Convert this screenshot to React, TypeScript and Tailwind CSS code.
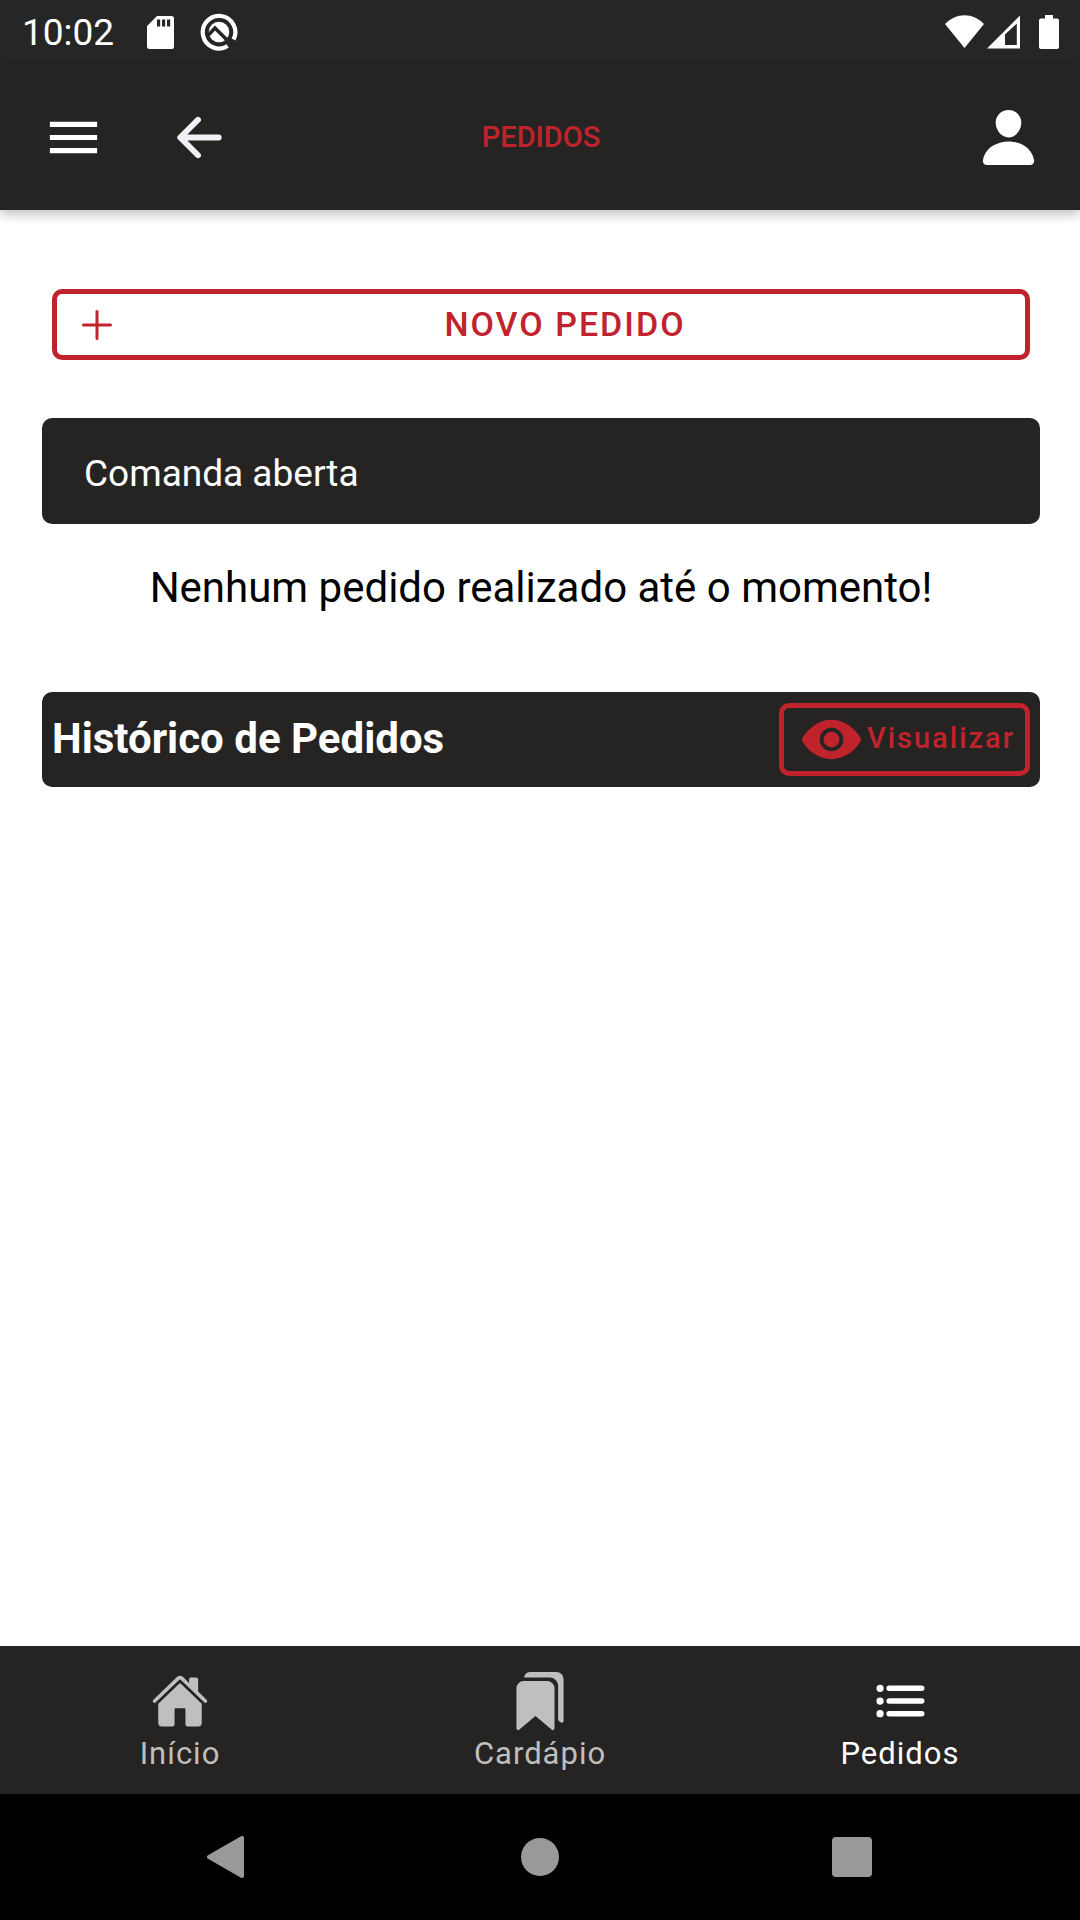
import type { ComponentType } from "react";
import {
  IoAdd,
  IoArrowBack,
  IoBookmarks,
  IoEye,
  IoHome,
  IoList,
  IoMenuSharp,
  IoPerson,
} from "react-icons/io5";

type Tab = {
  label: string;
  href: string;
  Icon: ComponentType<{ className?: string }>;
};

const TABS: Tab[] = [
  { label: "Início", href: "#inicio", Icon: IoHome },
  { label: "Cardápio", href: "#cardapio", Icon: IoBookmarks },
  { label: "Pedidos", href: "#pedidos", Icon: IoList },
];

const ACTIVE_TAB = "Pedidos";

function StatusBar() {
  return (
    <div className="flex h-16 items-center justify-between bg-[#262626] pl-[22px] pr-[21px] text-white">
      <div className="flex items-center">
        <span className="pt-0.5 text-[37px] leading-[40px]">10:02</span>

        {/* SD card */}
        <svg className="ml-[33px] h-[33px] w-[27px]" viewBox="0 0 27 33">
          <path
            fill="currentColor"
            fillRule="evenodd"
            d="M10 0H24.5A2.5 2.5 0 0 1 27 2.5V30.5A2.5 2.5 0 0 1 24.5 33H2.5A2.5 2.5 0 0 1 0 30.5V10ZM10 3.5V10.5H13.2V3.5ZM15 3.5V10.5H18.2V3.5ZM20 3.5V10.5H23.2V3.5Z"
          />
        </svg>

        {/* Android debug badge */}
        <svg className="ml-[26px] size-[38px]" viewBox="0 0 38 38" fill="none">
          <path
            d="M27.7 33A16.3 16.3 0 1 1 33.6 26.5"
            stroke="currentColor"
            strokeWidth="4.2"
          />
          <circle cx="19" cy="19" r="10.3" fill="currentColor" />
          <path d="M7.5 23L15 15L29 29" stroke="#262626" strokeWidth="3.6" />
        </svg>
      </div>

      <div className="flex items-center">
        {/* Wi-Fi */}
        <svg className="h-[34px] w-[39px]" viewBox="0 0 39 34">
          <path fill="currentColor" d="M0 9C11-2.7 28-2.7 39 9L19.5 33Z" />
        </svg>

        {/* Mobile signal */}
        <svg className="ml-[3px] h-[34px] w-[33px]" viewBox="0 0 33 34">
          <path
            fill="currentColor"
            fillRule="evenodd"
            d="M0 33.5L33 .5V33.5ZM18 19.5V30H29.8V8.5Z"
          />
        </svg>

        {/* Battery */}
        <svg className="ml-[19px] h-[34px] w-5" viewBox="0 0 20 34">
          <path
            fill="currentColor"
            d="M6 0H14V3.5H18A2 2 0 0 1 20 5.5V32A2 2 0 0 1 18 34H2A2 2 0 0 1 0 32V5.5A2 2 0 0 1 2 3.5H6Z"
          />
        </svg>
      </div>
    </div>
  );
}

function Header() {
  return (
    <header className="z-10 grid h-[146px] grid-cols-[1fr_auto_1fr] items-center bg-[#252422] pl-[42px] pr-10 shadow-[0_3px_12px_rgba(0,0,0,0.3)]">
      <div className="flex items-center gap-[63px]">
        <button type="button" aria-label="Menu" className="text-white">
          <IoMenuSharp className="size-[63px]" />
        </button>
        <button type="button" aria-label="Voltar" className="text-[#f1f2f7]">
          <IoArrowBack className="size-[63px]" />
        </button>
      </div>

      <h1 className="text-[29px] font-medium leading-[36px] text-[#c1232d]">PEDIDOS</h1>

      <button type="button" aria-label="Perfil" className="justify-self-end text-white">
        <IoPerson className="size-[63px]" />
      </button>
    </header>
  );
}

function TabBar() {
  return (
    <nav className="grid h-[148px] grid-cols-3 bg-[#252422]">
      {TABS.map(({ label, href, Icon }) => (
        <a
          key={label}
          href={href}
          className={
            label === ACTIVE_TAB
              ? "flex flex-col items-center gap-1.5 pt-[26px] text-white"
              : "flex flex-col items-center gap-1.5 pt-[26px] text-[#bfbfbf]"
          }
        >
          <Icon className="size-[58px]" />
          <span className="text-[31px] leading-[36px] tracking-[1px]">{label}</span>
        </a>
      ))}
    </nav>
  );
}

function SystemNav() {
  return (
    <div className="grid h-[126px] grid-cols-3 place-items-center bg-black px-[72px] text-[#999999]">
      <button type="button" aria-label="Voltar (sistema)">
        <svg className="size-[42px]" viewBox="0 0 42 42">
          <path
            d="M35 2V40L2 21Z"
            fill="currentColor"
            stroke="currentColor"
            strokeWidth="4"
            strokeLinejoin="round"
          />
        </svg>
      </button>
      <button type="button" aria-label="Tela inicial" className="size-[38px] rounded-full bg-[#999999]" />
      <button type="button" aria-label="Recentes" className="size-10 rounded bg-[#999999]" />
    </div>
  );
}

export default function App() {
  return (
    <div className="flex min-h-screen flex-col bg-white font-[Roboto,sans-serif]">
      <StatusBar />
      <Header />

      <main className="flex flex-1 flex-col pl-[42px] pr-10 pt-[79px]">
        <button
          type="button"
          className="mx-[10px] flex h-[71px] items-center rounded-[10px] border-[5px] border-[#c1232d] px-4 text-[#c1232d]"
        >
          <IoAdd className="size-12" />
          <span className="flex-1 pb-0.5 text-center text-[34px] font-medium leading-[40px] tracking-[2px]">
            NOVO PEDIDO
          </span>
        </button>

        {/* Comanda */}
        <section className="mt-[58px]">
          <h2 className="flex h-[106px] items-center rounded-[10px] bg-[#252422] px-[42px] pt-1.5 text-[37px] leading-[40px] text-white">
            Comanda aberta
          </h2>
          <p className="mt-10 text-center text-[42px] leading-[48px] text-black">
            Nenhum pedido realizado até o momento!
          </p>
        </section>

        {/* Histórico */}
        <section className="mt-20 flex h-[95px] items-center justify-between rounded-[10px] bg-[#252422] px-[10px]">
          <h2 className="pb-0.5 text-[42px] font-bold leading-[48px] text-white">Histórico de Pedidos</h2>
          <button
            type="button"
            className="flex h-[73px] items-center gap-1 rounded-[10px] border-[5px] border-[#c1232d] pl-4 pr-[10px] text-[#c1232d]"
          >
            <IoEye className="size-[63px]" />
            <span className="pb-1 text-[29px] font-medium leading-[36px] tracking-[2px]">Visualizar</span>
          </button>
        </section>
      </main>

      <TabBar />
      <SystemNav />
    </div>
  );
}
